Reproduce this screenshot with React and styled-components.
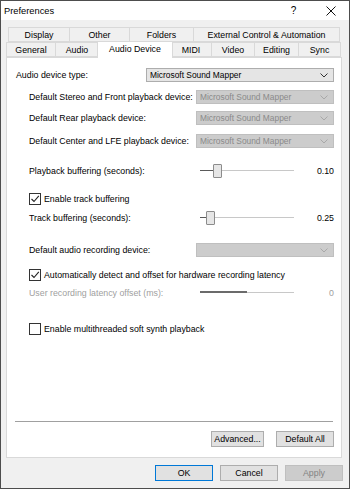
import React from 'react';
import styled, { createGlobalStyle } from 'styled-components';

const GlobalStyle = createGlobalStyle`
  html, body {
    margin: 0;
    padding: 0;
    background: #f0f0f0;
  }
  body {
    font-family: "Liberation Sans", Arial, sans-serif;
    font-size: 8.8px;
    color: #000;
  }
`

const Window = styled.div`
  box-sizing: border-box;
  width: 350px;
  height: 489px;
  border: 1px solid #4d4d4d;
  display: flex;
  flex-direction: column;
  background: #f0f0f0;
`

const TitleBar = styled.div`
  height: 19px;
  background: #fff;
  display: flex;
  align-items: center;
  padding-left: 3px;
  font-size: 9.3px;
`

const Title = styled.div`
  flex: 1;
`

const TitleButton = styled.div`
  width: 37px;
  display: flex;
  justify-content: center;
  align-items: center;
  font-size: 10px;
`

const Body = styled.div`
  flex: 1;
  display: flex;
  flex-direction: column;
  padding: 7px 7px 0 5px;
`

const TabRow = styled.div`
  display: flex;
  height: ${props => props.h}px;
  padding-left: ${props => props.indent}px;
  align-items: flex-end;
`

const Tab = styled.div`
  box-sizing: border-box;
  width: ${props => props.w}px;
  flex-shrink: 0;
  height: ${props => props.active ? 17 : 15}px;
  margin: ${props => props.active ? '0 -2px -1px -2px' : '0'};
  background: ${props => props.active ? '#fff' : '#f0f0f0'};
  border: 1px solid #d9d9d9;
  border-bottom: ${props => props.active ? 'none' : '1px solid #d9d9d9'};
  border-left: ${props => props.first || props.active ? '1px solid #d9d9d9' : 'none'};
  display: flex;
  align-items: center;
  justify-content: center;
  white-space: nowrap;
  position: relative;
  z-index: ${props => props.active ? 2 : 1};
  padding-bottom: ${props => props.active ? 2 : 0}px;
`

const Panel = styled.div`
  box-sizing: border-box;
  height: 401px;
  background: #fff;
  border: 1px solid #d9d9d9;
  display: flex;
  flex-direction: column;
  padding: 10px 7px 0 9px;
`

const Row = styled.div`
  display: flex;
  align-items: center;
  height: ${props => props.h || 21}px;
  margin-top: ${props => props.mt || 0}px;
  padding-left: ${props => props.indent || 0}px;
  color: ${props => props.disabled ? '#a0a0a0' : '#000'};
`

const Label = styled.div`
  flex: 1;
  white-space: nowrap;
`

const Select = styled.div`
  box-sizing: border-box;
  flex-shrink: 0;
  width: ${props => props.w}px;
  height: 14px;
  background: ${props => props.disabled ? '#cccccc' : '#e5e5e5'};
  border: 1px solid ${props => props.disabled ? '#bfbfbf' : '#adadad'};
  color: ${props => props.disabled ? '#8a8a8a' : '#000'};
  display: flex;
  align-items: center;
  padding: 0 5px 0 3px;
  font-size: 8.4px;
  span {
    flex: 1;
  }
`

const Chevron = ({ color }) => (
  <svg width="8" height="5" viewBox="0 0 8 5">
    <path d="M0.5 0.5 L4 4 L7.5 0.5" fill="none" stroke={color} strokeWidth="1" />
  </svg>
)

const SliderWrap = styled.div`
  flex-shrink: 0;
  width: 94px;
  height: 14px;
  position: relative;
  margin-right: 40px;
`

const Track = styled.div`
  position: absolute;
  left: 0;
  right: 0;
  top: 6px;
  height: 1px;
  background: #c8c8c8;
`

const TrackFill = styled.div`
  position: absolute;
  left: 0;
  top: ${props => props.thick ? 5 : 6}px;
  height: ${props => props.thick ? 2 : 1}px;
  background: ${props => props.thick ? '#6b6b6b' : '#5a5a5a'};
`

const Thumb = styled.div`
  box-sizing: border-box;
  position: absolute;
  top: 0;
  width: 9px;
  height: 14px;
  background: #e6e6e6;
  border: 1px solid #8c8c8c;
  border-radius: 1px;
`

const Value = styled.div`
  width: 20px;
  text-align: right;
  margin-left: -20px;
`

const Box = styled.div`
  box-sizing: border-box;
  flex-shrink: 0;
  width: 12px;
  height: 12px;
  border: 1px solid #333;
  background: #fff;
  margin-right: 3px;
  display: flex;
  align-items: center;
  justify-content: center;
`

const Separator = styled.div`
  height: 1px;
  background: #a0a0a0;
  margin: auto 1px 0 -1px;
`

const ButtonRow = styled.div`
  display: flex;
  justify-content: flex-end;
  gap: ${props => props.gap}px;
  padding: ${props => props.pad};
  margin-right: ${props => props.mr || 0}px;
`

const Button = styled.div`
  box-sizing: border-box;
  width: ${props => props.w}px;
  height: 16px;
  background: ${props => props.disabled ? '#cccccc' : '#e1e1e1'};
  border: 1px solid ${props => props.primary ? '#0078d7' : props.disabled ? '#bfbfbf' : '#adadad'};
  color: ${props => props.disabled ? '#838383' : '#000'};
  display: flex;
  align-items: center;
  justify-content: center;
`

const Slider = ({ pos, fill, thick, noThumb }) => (
  <SliderWrap>
    <Track />
    <TrackFill thick={thick} style={{ width: fill }} />
    {!noThumb && <Thumb style={{ left: pos }} />}
  </SliderWrap>
)

const Check = ({ checked }) => (
  <Box>
    {checked && (
      <svg width="10" height="10" viewBox="0 0 10 10">
        <path d="M1.5 5 L4 7.5 L8.8 1.8" fill="none" stroke="#222" strokeWidth="1.1" />
      </svg>
    )}
  </Box>
)

const topTabs = [
  { name: 'Display', w: 62 },
  { name: 'Other', w: 60 },
  { name: 'Folders', w: 64 },
  { name: 'External Control & Automation', w: 146 },
]

const bottomTabs = [
  { name: 'General', w: 50 },
  { name: 'Audio', w: 43 },
  { name: 'Audio Device', w: 76, active: true },
  { name: 'MIDI', w: 41 },
  { name: 'Video', w: 43 },
  { name: 'Editing', w: 44 },
  { name: 'Sync', w: 42 },
]

const App = () => (
  <>
    <GlobalStyle />
    <Window>
      <TitleBar>
        <Title>Preferences</Title>
        <TitleButton>?</TitleButton>
        <TitleButton>
          <svg width="10" height="10" viewBox="0 0 10 10">
            <path d="M0.5 0.5 L9.5 9.5 M9.5 0.5 L0.5 9.5" stroke="#111" strokeWidth="1" />
          </svg>
        </TitleButton>
      </TitleBar>
      <Body>
        <TabRow h={15} indent={2}>
          {topTabs.map((t, i) => (
            <Tab key={t.name} w={t.w} first={i === 0}>{t.name}</Tab>
          ))}
        </TabRow>
        <TabRow h={15} indent={0}>
          {bottomTabs.map((t, i) => (
            <Tab key={t.name} w={t.w} first={i === 0} active={t.active}>{t.name}</Tab>
          ))}
        </TabRow>
        <Panel>
          <Row h={14}>
            <Label>Audio device type:</Label>
            <Select w={188}>
              <span>Microsoft Sound Mapper</span>
              <Chevron color="#333" />
            </Select>
          </Row>
          <Row h={14} mt={8} indent={13}>
            <Label>Default Stereo and Front playback device:</Label>
            <Select w={138} disabled>
              <span>Microsoft Sound Mapper</span>
              <Chevron color="#a8a8a8" />
            </Select>
          </Row>
          <Row h={14} mt={7} indent={13}>
            <Label>Default Rear playback device:</Label>
            <Select w={138} disabled>
              <span>Microsoft Sound Mapper</span>
              <Chevron color="#a8a8a8" />
            </Select>
          </Row>
          <Row h={14} mt={9} indent={13}>
            <Label>Default Center and LFE playback device:</Label>
            <Select w={138} disabled>
              <span>Microsoft Sound Mapper</span>
              <Chevron color="#a8a8a8" />
            </Select>
          </Row>
          <Row h={14} mt={16} indent={13}>
            <Label>Playback buffering (seconds):</Label>
            <Slider pos={13} fill={14} />
            <Value>0.10</Value>
          </Row>
          <Row h={14} mt={14} indent={13}>
            <Check checked />
            <Label>Enable track buffering</Label>
          </Row>
          <Row h={14} mt={5} indent={13}>
            <Label>Track buffering (seconds):</Label>
            <Slider pos={6} fill={8} />
            <Value>0.25</Value>
          </Row>
          <Row h={14} mt={18} indent={13}>
            <Label>Default audio recording device:</Label>
            <Select w={138} disabled>
              <span></span>
              <Chevron color="#a8a8a8" />
            </Select>
          </Row>
          <Row h={14} mt={11} indent={13}>
            <Check checked />
            <Label>Automatically detect and offset for hardware recording latency</Label>
          </Row>
          <Row h={14} mt={4} indent={13} disabled>
            <Label>User recording latency offset (ms):</Label>
            <Slider fill={47} thick noThumb />
            <Value>0</Value>
          </Row>
          <Row h={14} mt={22} indent={13}>
            <Check />
            <Label>Enable multithreaded soft synth playback</Label>
          </Row>
          <Separator />
          <ButtonRow gap={12} pad="9px 0 10px 0">
            <Button w={53}>Advanced...</Button>
            <Button w={58}>Default All</Button>
          </ButtonRow>
        </Panel>
        <ButtonRow gap={7} pad="7px 0 0 0" mr={-1}>
          <Button w={58} primary>OK</Button>
          <Button w={58}>Cancel</Button>
          <Button w={58} disabled>Apply</Button>
        </ButtonRow>
      </Body>
    </Window>
  </>
);

export default App;
